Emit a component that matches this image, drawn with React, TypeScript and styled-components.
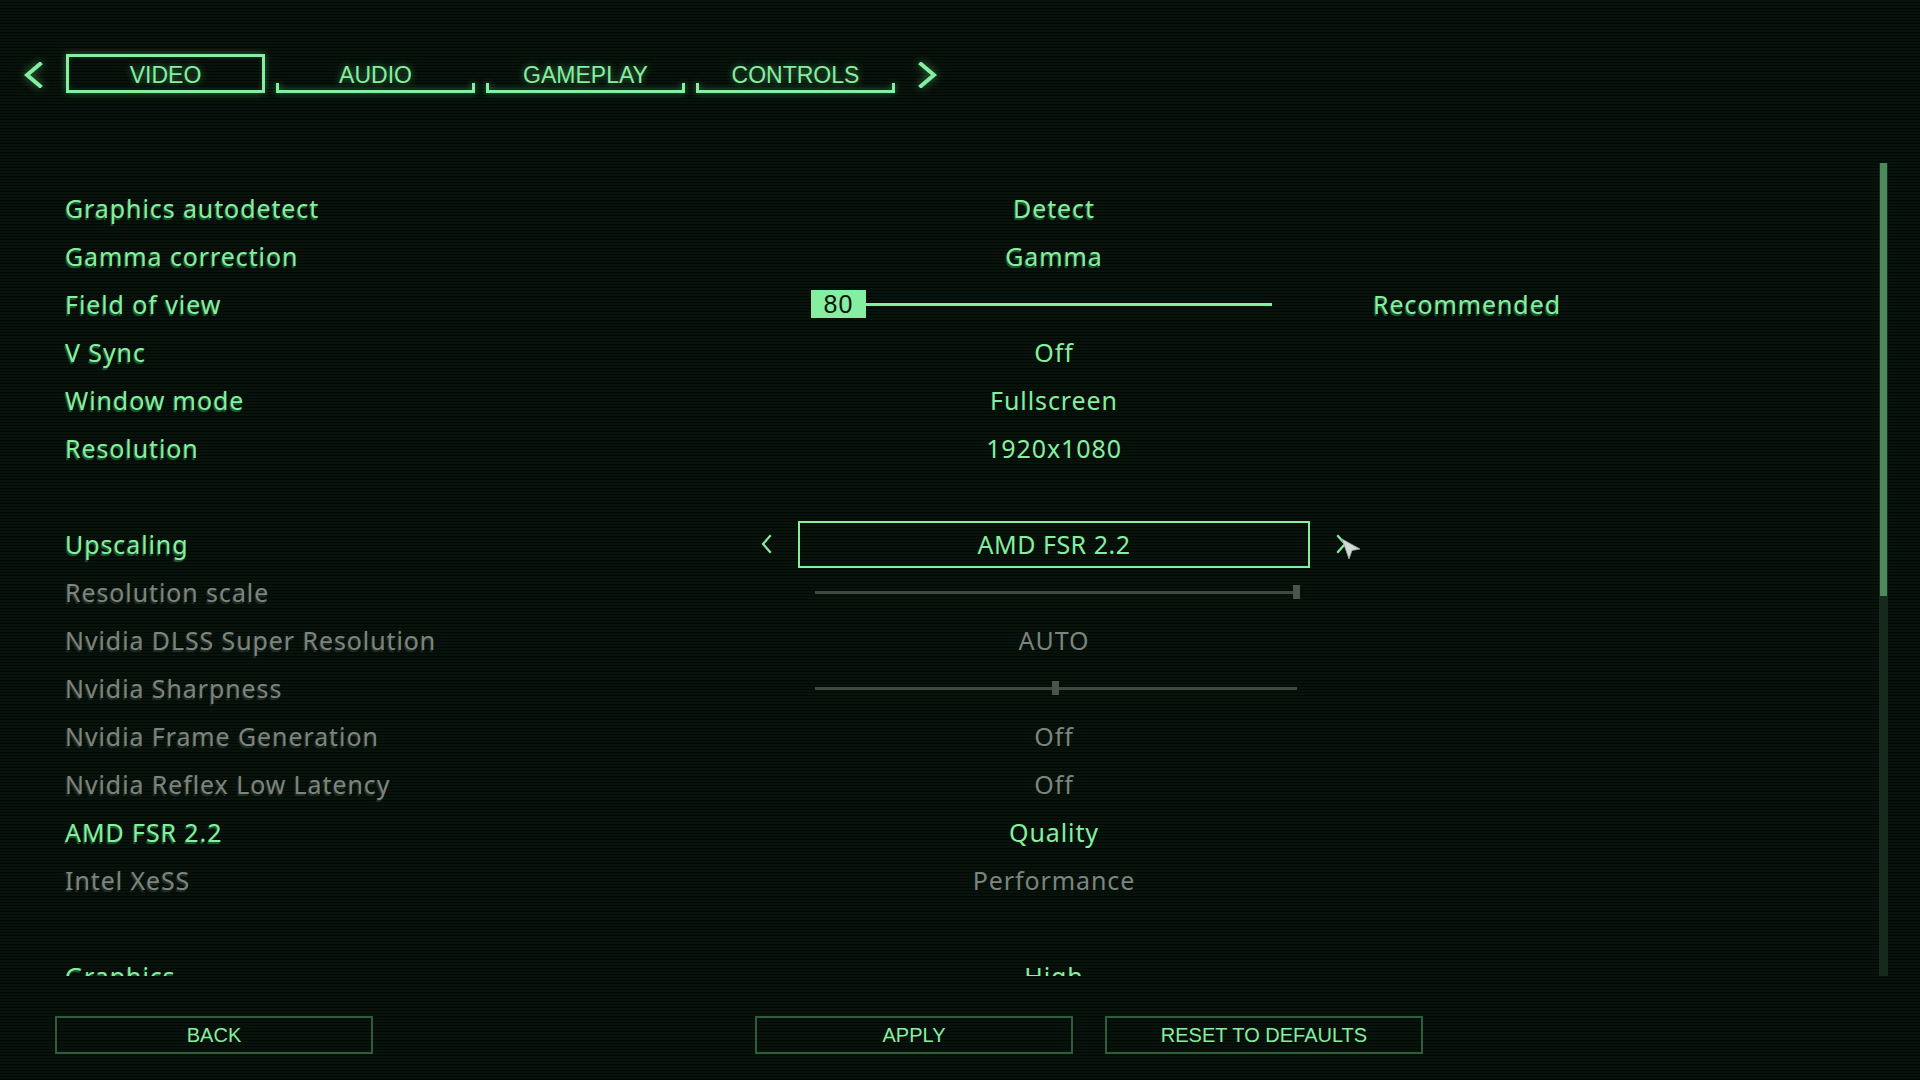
import React from "react";
import styled, { createGlobalStyle, css } from "styled-components";

const GREEN = "#86eea0";
const GREEN_SHADOW = "rgba(38, 96, 56, 0.95)";
const GREY = "#7b857d";
const GREY_SHADOW = "rgba(40, 46, 42, 0.95)";

const GlobalStyle = createGlobalStyle`
  html, body {
    margin: 0;
    padding: 0;
    width: 100%;
    height: 100%;
    overflow: hidden;
  }
  body {
    background-color: #050d08;
    background-image: repeating-linear-gradient(
      to bottom,
      #07130b 0px,
      #07130b 2px,
      #030906 2px,
      #030906 3px
    );
    font-family: "Noto Sans", "DejaVu Sans", sans-serif;
  }
`;

type Setting =
  | { kind: "text"; label: string; value: string; dim?: boolean; shadow?: boolean }
  | { kind: "fov"; label: string; value: number; extra: string }
  | { kind: "select"; label: string; value: string }
  | { kind: "slider"; label: string; pos: number; dim?: boolean }
  | { kind: "gap" };

const settings: Setting[] = [
  { kind: "text", label: "Graphics autodetect", value: "Detect", shadow: true },
  { kind: "text", label: "Gamma correction", value: "Gamma", shadow: true },
  { kind: "fov", label: "Field of view", value: 80, extra: "Recommended" },
  { kind: "text", label: "V Sync", value: "Off" },
  { kind: "text", label: "Window mode", value: "Fullscreen" },
  { kind: "text", label: "Resolution", value: "1920x1080" },
  { kind: "gap" },
  { kind: "select", label: "Upscaling", value: "AMD FSR 2.2" },
  { kind: "slider", label: "Resolution scale", pos: 100, dim: true },
  { kind: "text", label: "Nvidia DLSS Super Resolution", value: "AUTO", dim: true },
  { kind: "slider", label: "Nvidia Sharpness", pos: 50, dim: true },
  { kind: "text", label: "Nvidia Frame Generation", value: "Off", dim: true },
  { kind: "text", label: "Nvidia Reflex Low Latency", value: "Off", dim: true },
  { kind: "text", label: "AMD FSR 2.2", value: "Quality" },
  { kind: "text", label: "Intel XeSS", value: "Performance", dim: true },
  { kind: "gap" },
  { kind: "text", label: "Graphics", value: "High" },
];

const tabs = ["VIDEO", "AUDIO", "GAMEPLAY", "CONTROLS"];

const Chevron: React.FC<{ dir: "left" | "right"; thick?: boolean }> = ({ dir, thick }) => {
  const w = thick ? 19 : 13;
  const h = thick ? 26 : 20;
  const pts =
    dir === "left"
      ? `${w - 3},2 3,${h / 2} ${w - 3},${h - 2}`
      : `3,2 ${w - 3},${h / 2} 3,${h - 2}`;
  return (
    <svg width={w} height={h} viewBox={`0 0 ${w} ${h}`}>
      <polyline
        points={pts}
        fill="none"
        stroke={GREEN}
        strokeWidth={thick ? 4 : 2.2}
        strokeLinecap="square"
      />
    </svg>
  );
};

const App: React.FC = () => {
  return (
    <>
      <GlobalStyle />
      <Page>
        <TabBar>
          <NavArrow>
            <Chevron dir="left" thick />
          </NavArrow>
          <Tabs>
            {tabs.map((t, i) => (
              <Tab key={t} active={i === 0}>
                {t}
              </Tab>
            ))}
          </Tabs>
          <NavArrow>
            <Chevron dir="right" thick />
          </NavArrow>
        </TabBar>

        <Body>
          <SettingsList>
            {settings.map((s, i) => {
              if (s.kind === "gap") return <Spacer key={i} />;
              const dim = "dim" in s && !!s.dim;
              return (
                <Row key={i}>
                  <Label dim={dim}>{s.label}</Label>
                  {s.kind === "text" && (
                    <Value dim={dim} shadow={!!s.shadow}>
                      {s.value}
                    </Value>
                  )}
                  {s.kind === "fov" && (
                    <FovSlider>
                      <FovBox>{s.value}</FovBox>
                      <FovLine />
                    </FovSlider>
                  )}
                  {s.kind === "select" && (
                    <Selector>
                      <Chevron dir="left" />
                      <SelectBox>{s.value}</SelectBox>
                      <RightArrow>
                        <Chevron dir="right" />
                        <Cursor width="20" height="22" viewBox="0 0 20 22">
                          <polygon
                            points="1,1 19,11 11,12.5 8,21"
                            fill="#d6dad6"
                            stroke="#9aa09a"
                            strokeWidth="0.8"
                          />
                        </Cursor>
                      </RightArrow>
                    </Selector>
                  )}
                  {s.kind === "slider" && (
                    <GreySlider>
                      <Track>
                        <Knob style={{ left: `${s.pos}%` }} />
                      </Track>
                    </GreySlider>
                  )}
                  {s.kind === "fov" ? <Extra>{s.extra}</Extra> : <span />}
                </Row>
              );
            })}
          </SettingsList>
          <ScrollTrack>
            <ScrollThumb />
          </ScrollTrack>
        </Body>

        <Footer>
          <FooterButton>BACK</FooterButton>
          <ButtonGroup>
            <FooterButton>APPLY</FooterButton>
            <FooterButton>RESET TO DEFAULTS</FooterButton>
          </ButtonGroup>
        </Footer>
      </Page>
    </>
  );
};

export default App;

const Page = styled.div`
  width: 100vw;
  height: 100vh;
  display: flex;
  flex-direction: column;
  box-sizing: border-box;
`;

const TabBar = styled.div`
  display: flex;
  align-items: center;
  gap: 23px;
  padding: 54px 0 0 24px;
  height: 39px;
`;

const NavArrow = styled.div`
  display: flex;
  align-items: center;
  padding-top: 2px;
  filter: drop-shadow(0 0 4px rgba(110, 240, 140, 0.55));
`;

const Tabs = styled.div`
  display: flex;
  gap: 11px;
`;

const Tab = styled.div<{ active?: boolean }>`
  position: relative;
  width: 199px;
  height: 39px;
  box-sizing: border-box;
  display: flex;
  align-items: center;
  justify-content: center;
  padding-top: 3px;
  font-family: "Liberation Sans", Arial, sans-serif;
  font-size: 23px;
  color: ${GREEN};
  text-shadow: 0 0 7px rgba(110, 240, 140, 0.55);
  ${(p) =>
    p.active
      ? css`
          border: 3px solid ${GREEN};
          box-shadow: 0 0 7px rgba(110, 240, 140, 0.4), inset 0 0 5px rgba(110, 240, 140, 0.2);
        `
      : css`
          &::after {
            content: "";
            position: absolute;
            left: 0;
            right: 0;
            bottom: 0;
            height: 10px;
            border: 3px solid ${GREEN};
            border-top: none;
            box-sizing: border-box;
            filter: drop-shadow(0 0 3px rgba(110, 240, 140, 0.5));
          }
        `}
`;

const Body = styled.div`
  margin-top: 70px;
  height: 813px;
  display: flex;
`;

const SettingsList = styled.div`
  flex: 1;
  overflow: hidden;
  padding-top: 21px;
  box-sizing: border-box;
`;

const Row = styled.div`
  display: grid;
  grid-template-columns: 703px 512px 254px;
  column-gap: 30px;
  align-items: center;
  height: 48px;
  padding-left: 65px;
`;

const Spacer = styled.div`
  height: 48px;
`;

const Label = styled.div<{ dim?: boolean }>`
  font-size: 25px;
  letter-spacing: 0.9px;
  color: ${(p) => (p.dim ? GREY : GREEN)};
  text-shadow: -1px 2px 1px ${(p) => (p.dim ? GREY_SHADOW : GREEN_SHADOW)};
  white-space: nowrap;
`;

const Value = styled.div<{ dim?: boolean; shadow?: boolean }>`
  text-align: center;
  font-size: 25px;
  letter-spacing: 0.9px;
  color: ${(p) => (p.dim ? GREY : GREEN)};
  text-shadow: ${(p) => (p.shadow ? `-1px 2px 1px ${GREEN_SHADOW}` : "none")};
`;

const Extra = styled(Value)`
  text-shadow: -1px 2px 1px ${GREEN_SHADOW};
`;

const FovSlider = styled.div`
  display: flex;
  align-items: center;
  margin: 0 38px 0 13px;
`;

const FovBox = styled.div`
  width: 55px;
  height: 28px;
  background: ${GREEN};
  color: #07130b;
  font-family: "Liberation Sans", Arial, sans-serif;
  font-size: 25px;
  line-height: 28px;
  text-align: center;
  letter-spacing: 1px;
`;

const FovLine = styled.div`
  flex: 1;
  height: 3px;
  background: ${GREEN};
`;

const Selector = styled.div`
  display: flex;
  align-items: center;
  gap: 25px;
  margin: 0 -38px;
`;

const SelectBox = styled.div`
  width: 512px;
  height: 47px;
  box-sizing: border-box;
  border: 2px solid ${GREEN};
  display: flex;
  align-items: center;
  justify-content: center;
  font-size: 25px;
  letter-spacing: 0.5px;
  color: ${GREEN};
`;

const RightArrow = styled.div`
  position: relative;
  display: flex;
`;

const Cursor = styled.svg`
  position: absolute;
  left: 6px;
  top: 4px;
`;

const GreySlider = styled.div`
  margin: 0 13px 0 17px;
  display: flex;
  align-items: center;
  height: 20px;
`;

const Track = styled.div`
  position: relative;
  flex: 1;
  height: 3px;
  background: #3f4942;
`;

const Knob = styled.div`
  position: absolute;
  top: -6px;
  width: 7px;
  height: 14px;
  margin-left: -4px;
  background: #4b534d;
`;

const ScrollTrack = styled.div`
  width: 9px;
  height: 100%;
  margin-right: 32px;
  background: #17291c;
`;

const ScrollThumb = styled.div`
  height: 433px;
  width: 7px;
  margin-left: 1px;
  background: #4a8a5c;
`;

const Footer = styled.div`
  display: flex;
  margin-top: 40px;
  padding-left: 55px;
`;

const ButtonGroup = styled.div`
  display: flex;
  gap: 32px;
  margin-left: 382px;
`;

const FooterButton = styled.button`
  width: 318px;
  height: 38px;
  box-sizing: border-box;
  background: transparent;
  border: 2px solid #2f5c3b;
  color: ${GREEN};
  font-family: "Liberation Sans", Arial, sans-serif;
  font-size: 20px;
  padding: 0;
  cursor: pointer;
`;
